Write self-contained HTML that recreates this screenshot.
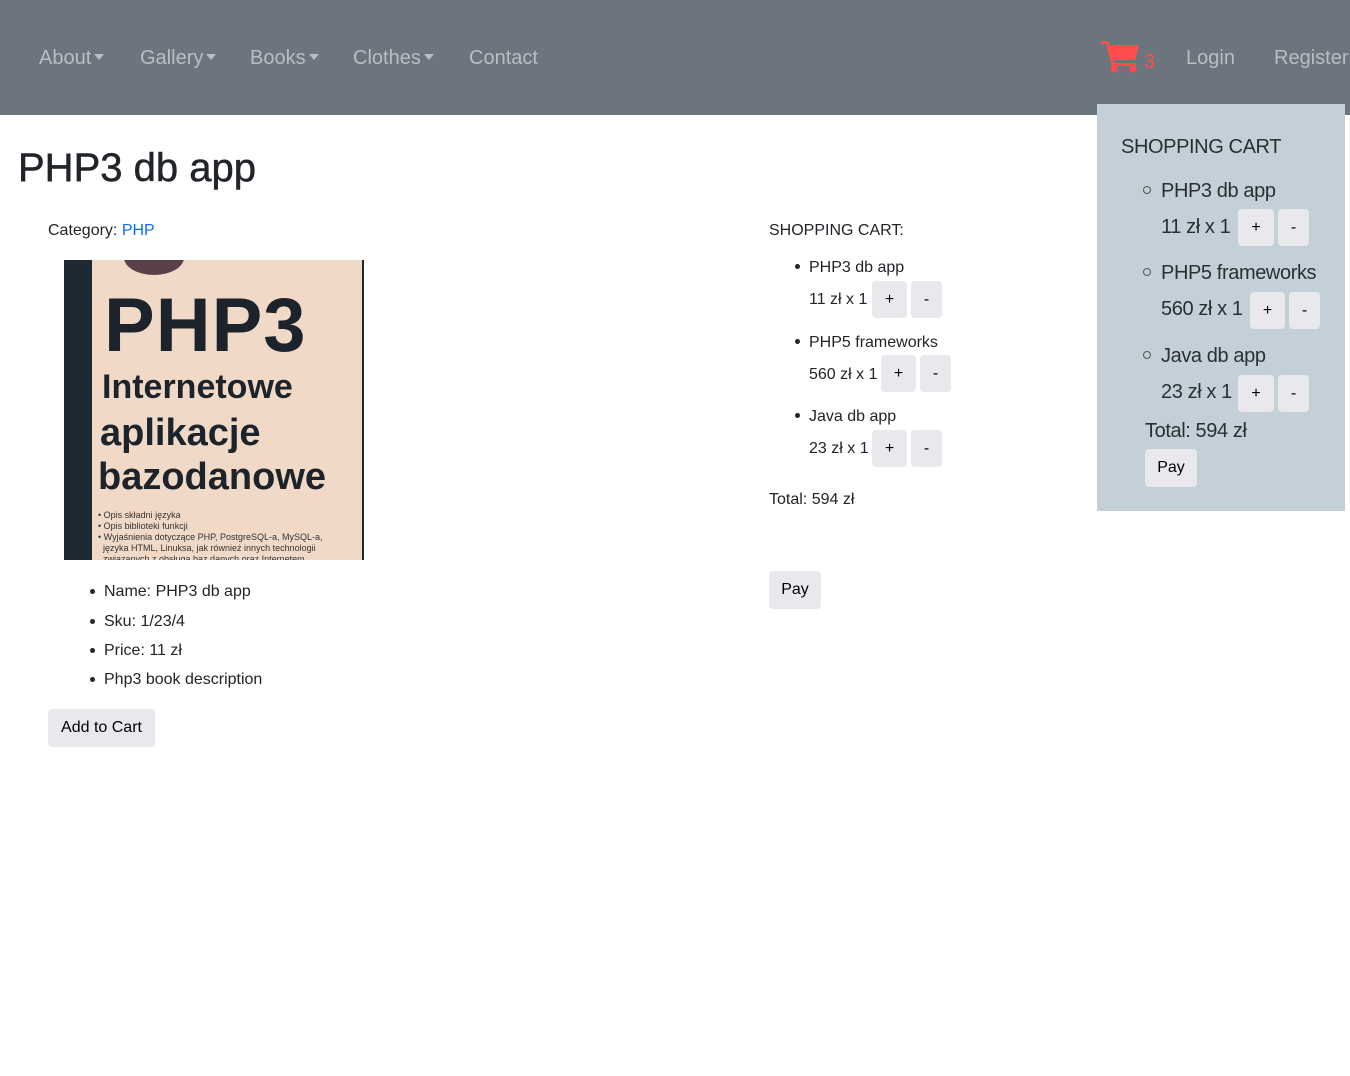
<!DOCTYPE html>
<html><head><meta charset="utf-8"><style>
*{margin:0;padding:0;box-sizing:border-box}
body{width:1350px;height:1076px;position:relative;background:#fff;font-family:"Liberation Sans",sans-serif;color:#212529;overflow:hidden}
.a{position:absolute;white-space:nowrap}
nav{position:absolute;left:0;top:0;width:1350px;height:115px;background:#6c757d}
.n{position:absolute;top:47px;font-size:20px;color:#b9bec2;font-weight:300}
.car{display:inline-block;width:0;height:0;border-left:5px solid transparent;border-right:5px solid transparent;border-top:6px solid #b9bec2;vertical-align:middle;margin-left:3px;margin-top:-3px}
.b{position:absolute;background:#e9e9ed;border-radius:4px;font-size:16px;color:#000;text-align:center}
.t{font-size:16px;margin-top:2px}
.dot{position:absolute;width:5px;height:5px;border-radius:50%;background:#212529;margin-top:-1px}
.c{position:absolute;width:8px;height:8px;border-radius:50%;border:1px solid #555}
.p{font-size:20px;font-weight:300;color:#2a2f33;margin-top:2px;letter-spacing:-0.4px}
</style></head><body>
<nav>
<div class="n" style="left:39px">About<span class="car"></span></div>
<div class="n" style="left:140px">Gallery<span class="car"></span></div>
<div class="n" style="left:250px">Books<span class="car"></span></div>
<div class="n" style="left:353px">Clothes<span class="car"></span></div>
<div class="n" style="left:469px">Contact</div>
<svg class="a" style="left:1101px;top:39px" width="40" height="34" viewBox="0 0 40 34"><path d="M0 2h7l2 4h29l-4 15H12l1 3h22v3H11L5 5H0z" fill="#ff4d4d"/><circle cx="13" cy="30" r="3.5" fill="#ff4d4d"/><circle cx="32" cy="30" r="3.5" fill="#ff4d4d"/></svg>
<div class="n" style="left:1144px;top:51px;color:#ff4d4d;font-size:20px">3</div>
<div class="n" style="left:1186px">Login</div>
<div class="n" style="left:1274px">Register</div>
</nav>
<div class="a" style="left:18px;top:146px;font-size:40px;font-weight:500;-webkit-text-stroke:0.5px #212529">PHP3 db app</div>
<div class="a t" style="left:48px;top:220px">Category: <span style="color:#0d6efd">PHP</span></div>
<div class="a" style="left:64px;top:260px;width:300px;height:300px;background:#1e2a33;overflow:hidden">
<div class="a" style="left:28px;top:0;width:270px;height:300px;background:#f1d9c7"></div>
<div class="a" style="left:60px;top:-20px;width:60px;height:35px;border-radius:50%;background:#5a4048"></div>
<div class="a" style="left:40px;top:22px;font-size:76px;font-weight:bold;color:#1d232b;letter-spacing:1px">PHP3</div>
<div class="a" style="left:38px;top:108px;font-size:34px;font-weight:bold;color:#1d232b">Internetowe</div>
<div class="a" style="left:36px;top:152px;font-size:38px;font-weight:bold;color:#1d232b">aplikacje</div>
<div class="a" style="left:34px;top:196px;font-size:38px;font-weight:bold;color:#1d232b">bazodanowe</div>
<div class="a" style="left:34px;top:250px;font-size:9px;color:#333;line-height:11px">• Opis składni języka<br>• Opis biblioteki funkcji<br>• Wyjaśnienia dotyczące PHP, PostgreSQL-a, MySQL-a,<br>&nbsp;&nbsp;języka HTML, Linuksa, jak również innych technologii<br>&nbsp;&nbsp;związanych z obsługą baz danych oraz Internetem</div>
</div>
<div class="dot" style="left:90px;top:590px"></div><div class="a t" style="left:104px;top:581px">Name: PHP3 db app</div>
<div class="dot" style="left:90px;top:620px"></div><div class="a t" style="left:104px;top:611px">Sku: 1/23/4</div>
<div class="dot" style="left:90px;top:649px"></div><div class="a t" style="left:104px;top:640px">Price: 11 zł</div>
<div class="dot" style="left:90px;top:678px"></div><div class="a t" style="left:104px;top:669px">Php3 book description</div>
<div class="b" style="left:48px;top:709px;width:107px;height:38px;line-height:38px">Add to Cart</div>

<div class="a t" style="left:769px;top:220px">SHOPPING CART:</div>
<div class="dot" style="left:795px;top:265px"></div><div class="a t" style="left:809px;top:257px">PHP3 db app</div>
<div class="a t" style="left:809px;top:289px">11 zł x 1</div>
<div class="b" style="left:872px;top:281px;width:35px;height:37px;line-height:37px">+</div>
<div class="b" style="left:911px;top:281px;width:31px;height:37px;line-height:37px">-</div>
<div class="dot" style="left:795px;top:340px"></div><div class="a t" style="left:809px;top:332px">PHP5 frameworks</div>
<div class="a t" style="left:809px;top:364px">560 zł x 1</div>
<div class="b" style="left:881px;top:355px;width:35px;height:37px;line-height:37px">+</div>
<div class="b" style="left:920px;top:355px;width:31px;height:37px;line-height:37px">-</div>
<div class="dot" style="left:795px;top:414px"></div><div class="a t" style="left:809px;top:406px">Java db app</div>
<div class="a t" style="left:809px;top:438px">23 zł x 1</div>
<div class="b" style="left:872px;top:430px;width:35px;height:37px;line-height:37px">+</div>
<div class="b" style="left:911px;top:430px;width:31px;height:37px;line-height:37px">-</div>
<div class="a t" style="left:769px;top:489px">Total: 594 zł</div>
<div class="b" style="left:769px;top:571px;width:52px;height:38px;line-height:38px">Pay</div>

<div class="a" style="left:1097px;top:104px;width:248px;height:407px;background:#c3d0d8">
<div class="a p" style="left:24px;top:30px">SHOPPING CART</div>
<div class="c" style="left:46px;top:82px"></div><div class="a p" style="left:64px;top:74px">PHP3 db app</div>
<div class="a p" style="left:64px;top:110px">11 zł x 1</div>
<div class="b" style="left:141px;top:105px;width:36px;height:37px;line-height:37px">+</div>
<div class="b" style="left:181px;top:105px;width:31px;height:37px;line-height:37px">-</div>
<div class="c" style="left:46px;top:164px"></div><div class="a p" style="left:64px;top:156px">PHP5 frameworks</div>
<div class="a p" style="left:64px;top:192px">560 zł x 1</div>
<div class="b" style="left:153px;top:188px;width:35px;height:37px;line-height:37px">+</div>
<div class="b" style="left:192px;top:188px;width:31px;height:37px;line-height:37px">-</div>
<div class="c" style="left:46px;top:247px"></div><div class="a p" style="left:64px;top:239px">Java db app</div>
<div class="a p" style="left:64px;top:275px">23 zł x 1</div>
<div class="b" style="left:141px;top:271px;width:36px;height:37px;line-height:37px">+</div>
<div class="b" style="left:181px;top:271px;width:31px;height:37px;line-height:37px">-</div>
<div class="a p" style="left:48px;top:314px">Total: 594 zł</div>
<div class="b" style="left:48px;top:345px;width:52px;height:38px;line-height:38px">Pay</div>
</div>
</body></html>
